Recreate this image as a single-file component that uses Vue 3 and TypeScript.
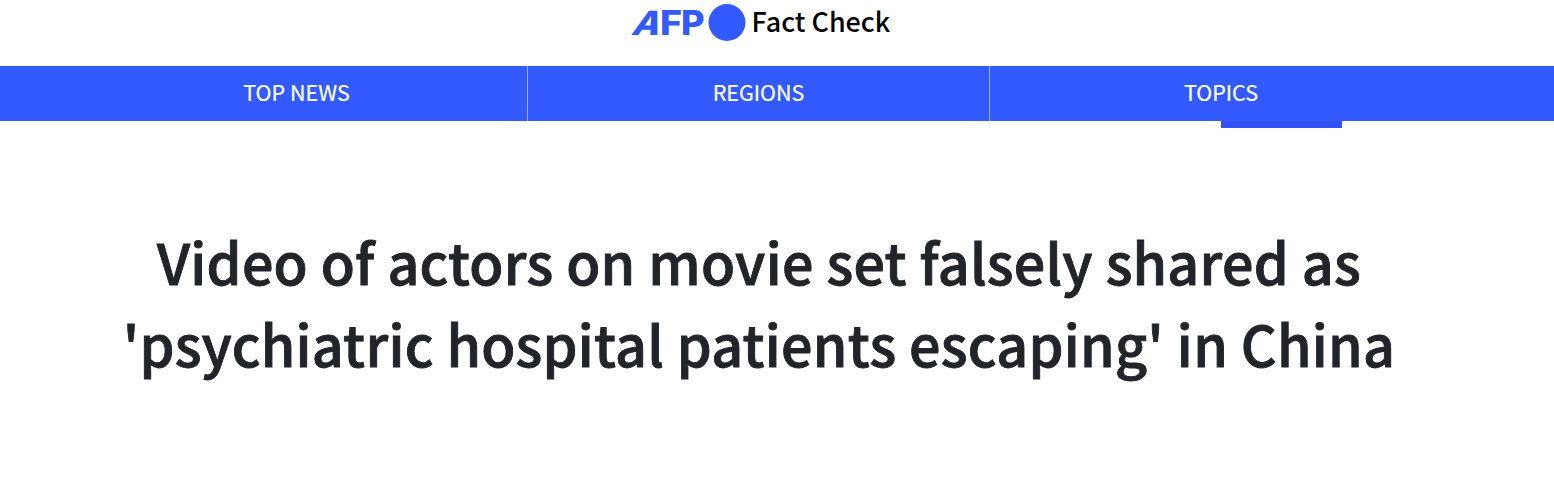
<script setup lang="ts">
interface NavItem {
  label: string
  key: string
}

const navItems: NavItem[] = [
  { label: 'TOP NEWS', key: 'news' },
  { label: 'REGIONS', key: 'regions' },
  { label: 'TOPICS', key: 'topics' },
]

const headline: string[] = [
  'Video of actors on movie set falsely shared as',
  "'psychiatric hospital patients escaping' in China",
]
</script>

<template>
  <div class="page">
    <header class="brand">
      <svg class="logo" width="131" height="56" viewBox="-15 0 131 56" aria-label="AFP">
        <text class="mark" transform="translate(-0.5 34.6) skewX(-20) scale(1.07 1)">A</text>
        <text class="mark" transform="translate(28.9 34.6) scale(1.12 1)">F</text>
        <text class="mark" transform="translate(50 34.6) scale(1.08 1)">P</text>
        <circle cx="96" cy="22.5" r="18.5" />
      </svg>
      <span class="brand-name">Fact Check</span>
    </header>
    <nav class="nav">
      <a v-for="item in navItems" :key="item.key" class="nav-item" :class="item.key">
        <span>{{ item.label }}</span>
      </a>
      <i class="indicator"></i>
    </nav>
    <main class="article">
      <h1 class="title">
        <span v-for="line in headline" :key="line">{{ line }}</span>
      </h1>
    </main>
  </div>
</template>

<style scoped>
.page {
  height: 495px;
  overflow: hidden;
  background: #fff;
  font-family: "Noto Sans CJK SC", "Noto Sans", sans-serif;
}
.brand {
  display: flex;
  height: 66px;
  padding-left: 616px;
  box-sizing: border-box;
}
.logo {
  flex: none;
  overflow: visible;
  fill: #325aff;
}
.mark {
  font-family: Inter, "Liberation Sans", sans-serif;
  font-size: 33.5px;
  font-weight: 800;
}
.brand-name {
  margin-left: 4.6px;
  line-height: 42px;
  font-size: 26.9px;
  font-weight: 500;
  color: #000;
  white-space: nowrap;
}
.nav {
  position: relative;
  display: grid;
  grid-template-columns: 528px 462px 1fr;
  height: 55px;
  background: #325aff;
}
.nav-item {
  box-sizing: border-box;
  color: #fff;
  font-size: 21.5px;
  line-height: 52px;
  text-align: center;
  white-space: nowrap;
  -webkit-text-stroke: 0.2px #fff;
}
.news {
  padding-left: 66px;
  border-right: 1px solid #9db1ff;
}
.regions {
  border-right: 1px solid #9db1ff;
}
.topics {
  padding-right: 102px;
}
.indicator {
  position: absolute;
  left: 1221px;
  top: 55px;
  width: 121px;
  height: 7px;
  background: #3052fa;
}
.title {
  display: flex;
  flex-direction: column;
  align-items: center;
  margin: 0;
  padding: 99px 36px 0 0;
  color: #212529;
  font-size: 55.6px;
  font-weight: 500;
  line-height: 82px;
  letter-spacing: 0.26px;
  white-space: nowrap;
  -webkit-text-stroke: 0.9px #212529;
}
</style>
